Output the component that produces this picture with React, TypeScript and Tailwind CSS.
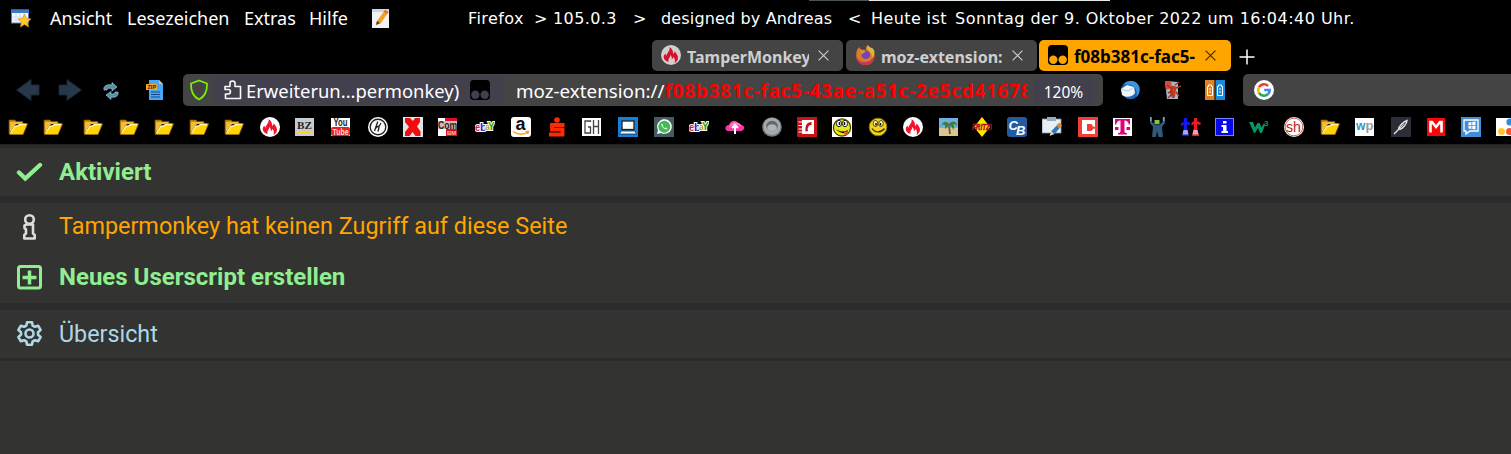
import { type ReactNode } from 'react';

interface IconProps {
    children: ReactNode;
    className?: string;
}

// 20x20 icon canvas shared by the toolbar and the bookmarks
function Icon({ children, className = '' }: IconProps) {
    return (
        <svg viewBox="0 0 20 20" className={`w-5 h-5 shrink-0 ${className}`}>
            {children}
        </svg>
    );
}

function Folder() {
    return (
        <Icon>
            <path d="M1 3h6l1 1.500h7V7H5L2 17H1z" fill="#c98f0a" stroke="#7a5200" strokeWidth=".7" />
            <path d="M2 5h12v2H8L3 14H2z" fill="#f0bd38" />
            <path d="M6.500 9l3-.5 2-1.700h8L15 17.500H1.500z" fill="#ffd400" stroke="#a87400" strokeWidth=".7" />
            <path d="M2.500 16l4.300-6.500 3.200-.6L12 7.500h6" fill="none" stroke="#fff6b8" strokeWidth="1.300" />
        </Icon>
    );
}

function Flame({ dim = false }: { dim?: boolean }) {
    return (
        <Icon>
            <circle cx="10" cy="10" r="10" fill={dim ? '#cfcfcf' : '#fff'} />
            <path
                d="M8.500 2c3 2 3.800 4 3.500 7 1-.5 1.500-1.500 1.600-2.800C16 9 18 12 16.500 15c-.8 1.600-2 2.500-3 3 .8-2 .6-4-1-6.200-.2 1.500-.8 2-1.700 2.300.2-1.800-.4-3-1.500-4.100.2 2.500-2.800 3.500-1.600 7C4 16 2 13.500 3 10.500c.3-.8.900-1.500 1.400-2 .1 1 .4 1.800 1 2.200C6.200 7.500 9.500 5.500 8.500 2z"
                fill={dim ? '#d90f2c' : '#f0142f'}
            />
        </Icon>
    );
}

function Monkey({ hole }: { hole: string }) {
    return (
        <Icon>
            <rect width="20" height="20" rx="4" fill="#000" />
            <circle cx="5.300" cy="14.700" r="4.200" fill={hole} />
            <circle cx="14.700" cy="14.700" r="4.200" fill={hole} />
        </Icon>
    );
}

function FirefoxLogo() {
    return (
        <Icon>
            <path d="M1.500 7C0 14 4 20 10.500 20c6 0 9.500-5 9-10.500-.4-3-2-4.500-3.500-6C14.500 2.500 13.500 1.500 13 0c-2.500 2-2.500 3.500-2 5L6.500 4.500C5 4 4.500 3 4.500 2 2.800 3.200 1.800 5 1.500 7z" fill="#dc7a2c" />
            <path d="M13 0c-2 3 0 5 2 7s2.500 4 2 6c3-3 3.500-8 0-10C14.500 2.200 13.500 1.500 13 0z" fill="#d9b93a" />
            <path d="M1 11c2 5 6 6.500 10 6 4-.5 7-3 8.500-7 .3 6-3.500 10-9 10C5 20 1 16 1 11z" fill="#cc3550" />
            <circle cx="10.800" cy="9.800" r="4.300" fill="#7444b4" />
            <path d="M5 5.500c2-.5 4 0 5.500 1C9.500 8 8 8 7.500 9.500c-1.500-.8-2.500-2-2.500-4z" fill="#dc8f2c" />
        </Icon>
    );
}

function Ebay() {
    return (
        <Icon>
            <g fontFamily="Liberation Sans" fontWeight="700" stroke="#fff" strokeWidth="2" paintOrder="stroke">
                <text x="0" y="14" fontSize="10" fill="#e0103a">e</text>
                <text x="5" y="14" fontSize="11" fill="#2b22d8">b</text>
                <text x="10" y="13" fontSize="9" fill="#b39a00">a</text>
                <text x="13" y="13" fontSize="10" fill="#22a000">Y</text>
            </g>
        </Icon>
    );
}

interface Bookmark {
    // distance to the previous bookmark
    gap: string;
    icon: ReactNode;
}

const bookmarks: Bookmark[] = [
    { gap: 'ml-2', icon: <Folder /> },
    { gap: 'ml-[15px]', icon: <Folder /> },
    { gap: 'ml-5', icon: <Folder /> },
    { gap: 'ml-4', icon: <Folder /> },
    { gap: 'ml-[15px]', icon: <Folder /> },
    { gap: 'ml-[15px]', icon: <Folder /> },
    { gap: 'ml-[15px]', icon: <Folder /> },
    { gap: 'ml-4', icon: <Flame /> },
    {
        gap: 'ml-[15px]',
        icon: (
            <Icon>
                <rect y="1" width="19" height="18" fill="#c9cbd0" />
                <text x="2" y="12" fontFamily="Liberation Serif" fontWeight="700" fontSize="11" textLength="15" lengthAdjust="spacingAndGlyphs" fill="#222">BZ</text>
                <rect x="2" y="14.500" width="15" height="2" fill="#ffd51c" />
            </Icon>
        ),
    },
    {
        gap: 'ml-4',
        icon: (
            <Icon>
                <rect y="1" width="19" height="18" fill="#fff" />
                <rect y="10" width="19" height="9" rx="2" fill="#ee2118" />
                <text x="2.500" y="9" fontFamily="Liberation Sans" fontWeight="700" fontSize="10" textLength="14" lengthAdjust="spacingAndGlyphs" fill="#222">You</text>
                <text x="1.500" y="18" fontFamily="Liberation Sans" fontWeight="700" fontSize="9" textLength="16" lengthAdjust="spacingAndGlyphs" fill="#ffd9d6">Tube</text>
            </Icon>
        ),
    },
    {
        gap: 'ml-[17px]',
        icon: (
            <Icon>
                <circle cx="10" cy="10" r="10" fill="#fff" />
                <circle cx="10" cy="10" r="7.800" fill="none" stroke="#222" strokeWidth="1.400" />
                <path d="M9.800 4.500L6.500 14M8 11c1.500-2 3.500-2.500 3-.5L10 14.500M13 6l-2.300 4" fill="none" stroke="#222" strokeWidth="1.300" />
            </Icon>
        ),
    },
    {
        gap: 'ml-[15px]',
        icon: (
            <Icon>
                <rect width="20" height="20" fill="#dfe6ea" />
                <path d="M2 1h5l3 3 2-3h5v4l-3 4.500 3.500 5V19h-5l-3-4-3 4H2v-4l4-5L2 5z" fill="#f40b0b" />
            </Icon>
        ),
    },
    {
        gap: 'ml-[15px]',
        icon: (
            <Icon>
                <rect y="1" width="19" height="18" fill="#fff" />
                <path d="M7 1h12v4H7zM8 12h11v7H8z" fill="#d80f2a" />
                <rect y="4" width="19" height="8" fill="#d8bcbc" />
                <text x="0" y="11.500" fontFamily="Liberation Sans" fontWeight="700" fontSize="10" textLength="19" lengthAdjust="spacingAndGlyphs" fill="#222">Com</text>
                <text x="9" y="18" fontFamily="Liberation Sans" fontWeight="700" fontSize="6" fill="#ffc0a0">BM</text>
            </Icon>
        ),
    },
    { gap: 'ml-[17px]', icon: <Ebay /> },
    {
        gap: 'ml-4',
        icon: (
            <Icon>
                <rect width="20" height="20" rx="3" fill="#fff" />
                <text x="4.500" y="13" fontFamily="Liberation Sans" fontWeight="700" fontSize="18" fill="#111">a</text>
                <path d="M2 14.500c5 3.500 11 3.500 15 .5M14.500 14.500h3l-1 2.500" fill="none" stroke="#ff9d1e" strokeWidth="1.500" />
            </Icon>
        ),
    },
    {
        gap: 'ml-4',
        icon: (
            <Icon>
                <circle cx="10" cy="3" r="2.800" fill="#ff2a00" />
                <path d="M17.500 8H5v4.500h10.500v5H2" fill="none" stroke="#ff2a00" strokeWidth="3.800" />
            </Icon>
        ),
    },
    {
        gap: 'ml-[15px]',
        icon: (
            <Icon>
                <rect y="1" width="19" height="18" fill="#fff" />
                <path d="M8.500 5V4H3v12h5.500v-6H6M11.500 3v14M16.500 3v14M11.500 9.500h5" fill="none" stroke="#444" strokeWidth="1.300" />
            </Icon>
        ),
    },
    {
        gap: 'ml-4',
        icon: (
            <Icon>
                <rect width="20" height="20" fill="#1680d8" />
                <rect x="4" y="4" width="12" height="8.500" fill="#fff" stroke="#222" strokeWidth="1.300" />
                <path d="M3 14h14l1.500 3h-17z" fill="#fff" stroke="#222" strokeWidth=".8" />
            </Icon>
        ),
    },
    {
        gap: 'ml-4',
        icon: (
            <Icon>
                <rect width="20" height="20" fill="#465a63" />
                <path d="M3 17l1-4A7.300 7.300 0 1 1 7 16z" fill="#fff" />
                <circle cx="10.300" cy="9.700" r="6" fill="#3fbd54" />
                <path d="M7.500 6.500c-1 3 3.500 7 6 5.500l-1.700-1.500-1.300.7-2-2 .7-1.200z" fill="#fff" />
            </Icon>
        ),
    },
    { gap: 'ml-[15px]', icon: <Ebay /> },
    {
        gap: 'ml-4',
        icon: (
            <Icon>
                <path d="M3 14C-1 13 0 8 4 8c1-4 6-6 9-2 2 0 3 1 3 2 4 0 4.500 5 0 6.200z" fill="#f23aa5" />
                <path d="M4 11c4-5 9-4 13-1-3-6-11-7-13 1z" fill="#ff86cf" />
                <path d="M10 17V9M7 11l3-3 3 3" fill="none" stroke="#fff" strokeWidth="2" />
            </Icon>
        ),
    },
    {
        gap: 'ml-[17px]',
        icon: (
            <Icon>
                <circle cx="10" cy="10" r="9.800" fill="#777c82" />
                <circle cx="10" cy="9.500" r="8.500" fill="#a5aab0" />
                <ellipse cx="10" cy="9" rx="5.800" ry="5.200" fill="#63676e" />
                <ellipse cx="10" cy="10.800" rx="4.800" ry="3.500" fill="#b0b4b9" />
            </Icon>
        ),
    },
    {
        gap: 'ml-[15px]',
        icon: (
            <Icon>
                <rect width="20" height="20" fill="#c51319" />
                <rect x="5" y="3" width="12" height="14" fill="#fff" />
                <path d="M1.500 5h5M1.500 8.500h5M1.500 12h5M1.500 15h5" stroke="#fff" strokeWidth="1.200" />
                <path d="M14.500 5c-5 0-6.500 4-6 9.500l2.500-.5-.3-2.500 1.300-3 2.500-.5z" fill="#c51319" />
            </Icon>
        ),
    },
    {
        gap: 'ml-[15px]',
        icon: (
            <Icon>
                <rect width="20" height="20" fill="#fff" />
                <circle cx="10" cy="10.500" r="8.600" fill="#e8e713" stroke="#333b00" strokeWidth="1.200" />
                <ellipse cx="7" cy="6.500" rx="2.600" ry="3.200" fill="#fff" stroke="#222" />
                <ellipse cx="13" cy="6.500" rx="2.600" ry="3.200" fill="#fff" stroke="#222" />
                <path d="M7.500 5v3M12.500 5v3" stroke="#111" strokeWidth="1.500" />
                <path d="M4 12c3 3 9 3 12 1l-1 3c-4 1-9-1-11-4z" fill="#111" />
                <path d="M12 14.500h4v3h-4z" fill="#f05a20" />
            </Icon>
        ),
    },
    {
        gap: 'ml-4',
        icon: (
            <Icon>
                <circle cx="10" cy="10" r="8.800" fill="#f2d21b" stroke="#8a7500" />
                <ellipse cx="7.500" cy="6.500" rx="2.300" ry="3" fill="#fff6a0" stroke="#222" strokeWidth=".8" />
                <ellipse cx="13" cy="6.500" rx="2.300" ry="3" fill="#fff6a0" stroke="#222" strokeWidth=".8" />
                <path d="M8 6v2.500M12.500 6v2.500" stroke="#111" strokeWidth="1.500" />
                <path d="M4 11.500c3 4.500 9 4.500 12.500 0" fill="none" stroke="#3b3000" strokeWidth="1.300" />
            </Icon>
        ),
    },
    { gap: 'ml-[15px]', icon: <Flame /> },
    {
        gap: 'ml-4',
        icon: (
            <Icon>
                <rect y="1" width="19" height="18" fill="#6fb0df" />
                <rect y="11" width="19" height="8" fill="#dcc68e" />
                <path d="M0 12h19v1.500H0z" fill="#b8c8c8" />
                <path d="M9 7l1 10h2L10.500 7z" fill="#6b5a35" />
                <path d="M10 7C7 3 3 5 2.500 9 5 6 7 8 6 12c2-1 3-3 4-5 1 3 4 2 4 6 2-3 1-5 0-6 2 0 3 1 4 2 0-5-5-6-8-2z" fill="#3f7d3b" />
            </Icon>
        ),
    },
    {
        gap: 'ml-[13px]',
        icon: (
            <Icon>
                <path d="M10 0l8 10-8 10L2 10z" fill="#ffe600" />
                <text x="0" y="13" fontFamily="Liberation Sans" fontWeight="700" fontStyle="italic" fontSize="9" textLength="20" lengthAdjust="spacingAndGlyphs" fill="#d8102a" stroke="#a00020" strokeWidth=".5">FRITZ!</text>
            </Icon>
        ),
    },
    {
        gap: 'ml-[15px]',
        icon: (
            <Icon>
                <rect width="20" height="20" rx="3" fill="#245aa0" />
                <text x="1.500" y="12.500" fontFamily="Liberation Sans" fontWeight="700" fontStyle="italic" fontSize="13" fill="#fff">C</text>
                <text x="9" y="17.500" fontFamily="Liberation Sans" fontWeight="700" fontStyle="italic" fontSize="13" fill="#fff">B</text>
            </Icon>
        ),
    },
    {
        gap: 'ml-[15px]',
        icon: (
            <Icon>
                <rect y="2" width="19" height="14" fill="#e9eff3" stroke="#7e93a0" strokeWidth=".8" />
                <rect x="5" width="9" height="4" fill="#97abb9" />
                <path d="M8 18l1.500-4L17 6l3 2.500-8 9z" fill="#2b78bd" />
                <path d="M17 6l3 2.500-2.500 3-3-2.700z" fill="#e9872e" />
                <path d="M9.500 14.500l2.500 2.500-4.500 2z" fill="#f3d9a6" />
            </Icon>
        ),
    },
    {
        gap: 'ml-4',
        icon: (
            <Icon>
                <rect width="20" height="20" fill="#f03e38" />
                <path d="M4 3h13v7l-2-.5L13.500 7H9v7h4.500l1.500-2 2-.5V17H4z" fill="#fff" />
            </Icon>
        ),
    },
    {
        gap: 'ml-[15px]',
        icon: (
            <Icon>
                <rect y="1" width="19" height="18" fill="#fff" />
                <path d="M2 2h15v5.500h-1.300C15.500 5 14 3.700 11.500 3.500V14c0 1.500.5 2 2.500 2v1.500H5V16c2 0 2.500-.5 2.500-2V3.500C5 3.700 3.500 5 3.300 7.500H2z" fill="#e2007a" />
                <path d="M2 10h3.500v3H2zM13.500 10H17v3h-3.500z" fill="#e2007a" />
            </Icon>
        ),
    },
    {
        gap: 'ml-[14px]',
        icon: (
            <Icon>
                <path d="M3 0v6l3 4-1 10h4l1-6 1.500 6H16l-1-10 3-4V0h-2l-.5 5-3 2.500H8L5 5 5 0z" fill="#315878" />
                <rect x="7.500" y="3" width="5" height="4" fill="#7dc943" />
                <path d="M3 0h1.500v4H3zM16 0h1.500v4H16z" fill="#84a0b2" />
            </Icon>
        ),
    },
    {
        gap: 'ml-[14px]',
        icon: (
            <Icon className="mt-0.5">
                <path d="M3 0h3v3l3.500 2.500-1 2L6 6.500V10l2 8H1l2-8V7L0 8V5l3-1z" fill="#1519ef" />
                <path d="M13 0h3v3l4 2-1 2-3-1v4l2 8h-7l2-8V6l-2.500 1.500V5L13 3z" fill="#ed1b2a" />
                <path d="M2.500 12h4l1 4.500h-6z" fill="#a7aaf0" />
                <path d="M12.500 12h4l1 4.500h-6z" fill="#f0a3a8" />
            </Icon>
        ),
    },
    {
        gap: 'ml-[14px]',
        icon: (
            <Icon>
                <rect y="1" width="19" height="18" fill="#7784ff" />
                <rect x="1" y="2" width="17" height="16" fill="#0808ee" />
                <path d="M8 4h3.500v2.500H8zM6.500 8h5v6H13v2H6.500v-2H8v-4H6.500z" fill="#fff" />
            </Icon>
        ),
    },
    {
        gap: 'ml-[14px]',
        icon: (
            <Icon>
                <path d="M0 5h4l2 5.500L8.500 6h2l2 4.500L15 6l1 2-3 8h-2l-2-5-3 5H5z" fill="#079765" />
                <text x="15" y="8.500" fontFamily="Liberation Sans" fontWeight="700" fontSize="8" fill="#079765">3</text>
            </Icon>
        ),
    },
    {
        gap: 'ml-[15px]',
        icon: (
            <Icon>
                <circle cx="10" cy="10" r="10" fill="#fff" />
                <circle cx="10" cy="10" r="8.800" fill="none" stroke="#c53b3b" strokeWidth=".8" />
                <text x="2" y="15" fontFamily="Liberation Sans" fontSize="15" textLength="15" lengthAdjust="spacingAndGlyphs" fill="#c01818">sh</text>
            </Icon>
        ),
    },
    { gap: 'ml-4', icon: <Folder /> },
    {
        gap: 'ml-[15px]',
        icon: (
            <Icon>
                <rect y="1" width="19" height="18" fill="#fff" />
                <text x="1" y="12.500" fontFamily="Liberation Sans" fontWeight="700" fontSize="12" fill="#338fd0">w</text>
                <text x="10.500" y="12.500" fontFamily="Liberation Sans" fontWeight="700" fontSize="13" fill="#999">p</text>
            </Icon>
        ),
    },
    {
        gap: 'ml-4',
        icon: (
            <Icon>
                <rect width="20" height="20" fill="#2b2e38" />
                <path d="M3 17l4.500-4.500c0-3 5-8 8.500-9 0 3-4.500 8.500-7.500 9" fill="none" stroke="#e8e8e8" strokeWidth="1.400" />
                <path d="M8 12.500l5-6" stroke="#e8e8e8" />
            </Icon>
        ),
    },
    {
        gap: 'ml-4',
        icon: (
            <Icon>
                <rect y="1" width="18" height="18" fill="#f90606" />
                <path d="M3.500 15.500V5H5l4 5 4-5h1.500v10.500" fill="none" stroke="#fff" strokeWidth="2.600" />
            </Icon>
        ),
    },
    {
        gap: 'ml-[14px]',
        icon: (
            <Icon>
                <rect width="20" height="20" fill="#438ed8" />
                <path d="M3 3h14v11H9l-4 3v-3H3z" fill="none" stroke="#fff" strokeWidth="1.300" />
                <path d="M7.500 5.500l7-1v8l-7-1z" fill="#fff" />
                <path d="M7.500 8.500h7M10.800 4.500v8" stroke="#438ed8" strokeWidth=".8" />
            </Icon>
        ),
    },
    {
        gap: 'ml-[15px]',
        icon: (
            <Icon>
                <rect y="1" width="20" height="18" fill="#fff" />
                <circle cx="14" cy="5" r="3.600" fill="#248fe8" />
                <circle cx="5.500" cy="14.500" r="3.500" fill="#ffc72e" />
                <circle cx="13.500" cy="14.500" r="3.500" fill="#f9552d" />
            </Icon>
        ),
    },
];

function MenuBar() {
    return (
        <div className="relative flex h-[38px] items-center whitespace-pre text-white">
            {/* window edge showing through at the top */}
            <div className="absolute top-0 left-[809px] flex h-px">
                <div className="w-[60px] bg-[#4a5459]" />
                <div className="w-[241px] bg-[#e6ebe9]" />
            </div>
            <Icon className="ml-[11px]">
                <rect x=".5" y="1" width="17" height="13" fill="#f4f8fd" stroke="#4a80c8" />
                <rect x="0" y=".5" width="18" height="3.500" fill="#3c79ce" />
                <path d="M5 4v10M9 4v10M13 4v10M1 8h16M1 11h16" stroke="#c9d7e8" strokeWidth=".8" />
                <path d="M13.500 5l2 4.500 4.500.4-3.400 3.200 1 4.900-4.100-2.500L9.400 18l1-4.900L7 9.900l4.500-.4z" fill="#ffc72c" stroke="#d78d00" strokeWidth=".6" />
            </Icon>
            <div className="flex pb-0.5 text-[18px] leading-6">
                <span className="ml-[19px] w-[77px]">Ansicht</span>
                <span className="w-[117px]">Lesezeichen</span>
                <span className="w-[65px]">Extras</span>
                <span className="w-[62px]">Hilfe</span>
            </div>
            <Icon className="-mt-px">
                <rect x="1" y="0" width="17" height="19" fill="#eff1f5" />
                <path d="M1 0h17v3H1z" fill="#cdd3dc" />
                <path d="M5 16l1-4L14 1l3.500 2-8 11.500z" fill="#f5a11c" />
                <path d="M14 1l3.500 2-1.500 2-3.300-2.300z" fill="#e86848" />
                <path d="M5 16l1-4 3 2z" fill="#4c3c2c" />
            </Icon>
            <div className="flex font-['DejaVu_Sans',sans-serif] text-base tracking-[.4px]">
                <span className="ml-[77px] w-[66px]">Firefox</span>
                <span className="w-[19px]">&gt;</span>
                <span className="w-[80px]">105.0.3</span>
                <span className="w-[28px]">&gt;</span>
                <span className="w-[187px] tracking-[.15px]">designed by Andreas</span>
                <span className="w-[23px]">&lt;</span>
                <span className="w-[84px]">Heute ist</span>
                <span className="tracking-[.48px]">Sonntag der 9. Oktober 2022 um 16:04:40 Uhr.</span>
            </div>
        </div>
    );
}

interface TabProps {
    icon: ReactNode;
    title: string;
    active?: boolean;
}

function Tab({ icon, title, active }: TabProps) {
    return (
        <div className={`flex h-[31px] items-center rounded-[5px] pl-[9px] ${active ? '-ml-px w-48 bg-[#ffa500] text-black' : 'w-[191px] bg-[#444] text-[#cfcfcf]'}`}>
            {icon}
            <span className={`mt-[3px] ml-1.5 w-[122px] overflow-hidden font-bold whitespace-nowrap ${active ? 'text-[17px]' : 'text-base'}`}>{title}</span>
            <svg viewBox="0 0 10 10" className="ml-[9px] h-[11px] w-[11px]" fill="none" stroke={active ? '#3a2600' : '#cfcfcf'} strokeWidth="1">
                <path d="M.5.5l9 9M9.500.5l-9 9" />
            </svg>
        </div>
    );
}

function TabBar() {
    return (
        <div className="flex h-9 items-center gap-[3px] pb-1 pt-0.5 pl-[652px]">
            <Tab icon={<Flame dim />} title="TamperMonkey" />
            <Tab icon={<FirefoxLogo />} title="moz-extension:" />
            <Tab icon={<Monkey hole="#ffa500" />} title="f08b381c-fac5-" active />
            <svg viewBox="0 0 16 16" className="mt-1 ml-[5px] h-4 w-4" stroke="#fff" strokeWidth="1.500">
                <path d="M8 .5v15M.5 8h15" />
            </svg>
        </div>
    );
}

function NavBar() {
    return (
        <div className="flex h-8 items-center">
            <svg viewBox="0 0 24 22" className="ml-4 h-[22px] w-6" fill="#27384a" stroke="#1a2633">
                <path d="M.5 11L15 .5V6h8v10h-8v5.500z" />
            </svg>
            <svg viewBox="0 0 24 22" className="ml-[18px] h-[22px] w-6" fill="#27384a" stroke="#1a2633">
                <path d="M23.500 11L9 .5V6H1v10h8v5.500z" />
            </svg>
            <Icon className="mt-0.5 ml-[19px]">
                <path d="M3 9c-1-4 3-6 8-5V1.500L16 6l-5 4V7.500C8 7 6 7 6 9zM17 11c1 4-3 6-7 5v2.500L5 14l5-3.500V13c2 0 4 0 4-2z" fill="#4f93a8" stroke="#b7d5de" strokeWidth=".6" />
            </Icon>
            <Icon className="ml-[25px]">
                <path d="M3 0h10l4 4v16H3z" fill="#4aa7f5" />
                <path d="M13 0v4h4z" fill="#f7b750" />
                <rect x="0" y="4" width="11" height="6" fill="#f5a52b" />
                <text x="1.500" y="9" fontFamily="Liberation Sans" fontWeight="700" fontSize="5.500" fill="#402000">ZIP</text>
                <path d="M5 12h9M5 14.500h9M5 17h9" stroke="#154a80" strokeWidth="1.200" />
            </Icon>

            <div className="ml-[17px] flex h-8 w-[920px] items-center rounded-[5px] bg-[#444] whitespace-nowrap text-white">
                <svg viewBox="0 0 20 22" className="ml-1.5 h-[22px] w-5" fill="none" stroke="#7cf000" strokeWidth="1.800">
                    <path d="M10 1.500l8 3c.3 8-2 13-8 16-6-3-8.300-8-8-16z" strokeLinejoin="round" />
                </svg>
                <div className="ml-1 flex h-7 w-[291px] items-center rounded-[4px] bg-[#42404d]">
                    <svg viewBox="0 0 18 20" className="ml-[11px] h-5 w-[18px]" fill="none" stroke="#fbfbfe" strokeWidth="1.600" strokeLinejoin="round">
                        <path d="M1 8V6.500h5V3.500a2.500 2.500 0 0 1 5 0v3h5.500V18.500H1.500V14h2.700a2 2 0 0 0 0-4.500H1z" />
                    </svg>
                    <span className="ml-1 w-[224px] pt-0.5 text-[18.4px] leading-6">Erweiterun...permonkey)</span>
                    <Monkey hole="#42404d" />
                </div>
                <span className="ml-3 pt-0.5 text-[18.800px] leading-6">moz-extension://</span>
                <span className="flex-1 overflow-hidden pt-0.5 text-[19px] leading-6 font-bold tracking-[.7px] text-[#f00]">f08b381c-fac5-43ae-a51c-2e5cd41678</span>
                <span className="mr-[10px] ml-1.5 h-7 w-[59px] rounded-[4px] bg-[#42404d] pt-0.5 text-center text-[15.500px] leading-7">120%</span>
            </div>

            <Icon className="ml-[17px]">
                <circle cx="10.500" cy="10" r="9.300" fill="#1c65b5" />
                <path d="M4 4C8-1 19 0 19.500 9c0 3-1 6-3 8 1-6 0-9-5-12z" fill="#3f91dc" />
                <path d="M1 9l6-4 7 2 1 6c-2 4-9 5-13 2z" fill="#f0f5fa" />
                <path d="M1 9l7 2 6-4" fill="none" stroke="#b5c8da" />
            </Icon>
            <Icon className="ml-[23px]">
                <path d="M2 1l13 1v17H4z" fill="#9db8d4" />
                <path d="M2 1l6 0 1 7-6 2z" fill="#d84a3a" />
                <path d="M9 6c3-1 5 1 4 4s0 7-2 8-4-3-4-6 0-5 2-6z" fill="#c33a1c" />
                <path d="M4 5l5 4M5 13l4-2M5 18l4-4M13 8l5-2M13 12l3 4M12 5l4-3" stroke="#a0301a" strokeWidth="1.400" />
            </Icon>
            <Icon className="ml-[22px]">
                <rect width="9.500" height="20" fill="#e08324" />
                <rect x="10.500" width="9.500" height="20" fill="#178be0" />
                <path d="M2.500 6.500h1V5h3v1.500h1v9h-5zM12.500 6.500h1V5h3v1.500h1v9h-5z" fill="none" stroke="#fff" />
                <path d="M4 9h2M4 12h2M14 9h2M14 12h2" stroke="#fff" />
            </Icon>

            <div className="ml-[18px] flex h-8 flex-1 items-center rounded-l-[5px] bg-[#444] pl-[11px]">
                <Icon>
                    <circle cx="10" cy="10" r="10" fill="#fff" />
                    <g fill="none" strokeWidth="2.600">
                        <path d="M5 7.200A5.700 5.700 0 0 1 14 6" stroke="#ea4335" />
                        <path d="M5 12.800A5.700 5.700 0 0 1 5 7.200" stroke="#fbbc05" />
                        <path d="M14 14A5.700 5.700 0 0 1 5 12.800" stroke="#34a853" />
                        <path d="M10.200 10h5.500c0 1.600-.6 3-1.700 4" stroke="#4285f4" />
                    </g>
                </Icon>
            </div>
        </div>
    );
}

function BookmarkBar() {
    return (
        <div className="flex h-[38px] items-center overflow-hidden pt-1">
            {bookmarks.map((bookmark, idx) => (
                <div key={idx} className={`shrink-0 ${bookmark.gap}`}>
                    {bookmark.icon}
                </div>
            ))}
        </div>
    );
}

interface MenuRowProps {
    icon: ReactNode;
    label: string;
    className: string;
}

function MenuRow({ icon, label, className }: MenuRowProps) {
    return (
        <div className={`flex items-center pl-4 ${className}`}>
            <svg viewBox="0 0 28 28" className="mr-[15px] h-7 w-7 shrink-0">
                {icon}
            </svg>
            <span>{label}</span>
        </div>
    );
}

function Popup() {
    return (
        <div className="h-[310px] border-t border-[#222] bg-[#333331] font-['Roboto',sans-serif]">
            <div className="h-[3px] bg-[#2b2b2b]" />
            <MenuRow
                className="h-12 text-2xl font-bold text-[#90ee90]"
                label="Aktiviert"
                icon={<path d="M3 14.500l6.300 6L24 7" fill="none" stroke="#90ee90" strokeWidth="4.400" strokeLinecap="round" />}
            />
            <div className="h-[7px] bg-[#2b2b2b]" />
            <MenuRow
                className="h-[50px] pb-0.5 text-[23.400px] text-[#ffa500]"
                label="Tampermonkey hat keinen Zugriff auf diese Seite"
                icon={
                    <g fill="none" stroke="#ddd" strokeWidth="2.600" strokeLinejoin="round">
                        <circle cx="13.500" cy="6.500" r="4.300" />
                        <path d="M10.500 11.500h6.500v9l1.700 1.500v3.500H8.300V22l1.700-1.500v-4L8.500 15v-2.500z" />
                    </g>
                }
            />
            <MenuRow
                className="h-[50px] pb-0.5 text-2xl font-bold text-[#90ee90]"
                label="Neues Userscript erstellen"
                icon={
                    <g fill="none" stroke="#90ee90" strokeWidth="3">
                        <rect x="2.500" y="3.500" width="22" height="21.500" rx="2" />
                        <path d="M13.500 7.500v14M6.500 14.500h14" strokeWidth="3.500" />
                    </g>
                }
            />
            <div className="h-[7px] bg-[#2b2b2b]" />
            <MenuRow
                className="h-12 text-[23.300px] text-[#add8e6]"
                label="Übersicht"
                icon={
                    <g fill="none" stroke="#add8e6" strokeWidth="2.600" strokeLinejoin="round">
                        <path d="M11 2.200h5l.6 3.300 2.300 1.300 3.200-1.100 2.500 4.300-2.600 2.200v2.600l2.600 2.200-2.500 4.300-3.200-1.100-2.300 1.300-.6 3.300h-5l-.6-3.300-2.300-1.300-3.200 1.100L2.400 17 5 14.800v-2.600L2.400 10l2.500-4.300 3.200 1.100 2.300-1.300z" />
                        <circle cx="13.500" cy="13.500" r="4" />
                    </g>
                }
            />
            <div className="h-[3px] bg-[#2b2b2b]" />
        </div>
    );
}

export default function App() {
    return (
        <div className="h-[454px] w-[1511px] overflow-hidden bg-black font-['Noto_Sans',sans-serif]">
            <MenuBar />
            <TabBar />
            <NavBar />
            <BookmarkBar />
            <Popup />
        </div>
    );
}
